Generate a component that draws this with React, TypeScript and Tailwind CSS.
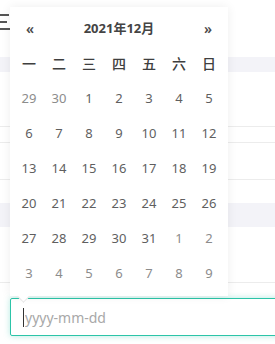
import React from "react";

const weekdays = ["一", "二", "三", "四", "五", "六", "日"];

const days: { n: number; cur: boolean }[] = [
  { n: 29, cur: false },
  { n: 30, cur: false },
  ...Array.from({ length: 31 }, (_, i) => ({ n: i + 1, cur: true })),
  ...Array.from({ length: 9 }, (_, i) => ({ n: i + 1, cur: false })),
];

const DatePopover = () => {
  return (
    <div className="absolute left-[10px] top-[7px] w-[218px] h-[289px] bg-white p-[4px] shadow-[0_0_10px_rgba(0,0,0,0.07)]">
      {/* header */}
      <div className="flex h-[35px] items-center justify-between px-[12px] text-[#4a4a4a]">
        <span className="text-[14px] font-semibold leading-none">«</span>
        <span className="text-[13px] font-bold text-[#444]">2021年12月</span>
        <span className="text-[14px] font-semibold leading-none">»</span>
      </div>
      {/* weekdays */}
      <div className="grid grid-cols-7">
        {weekdays.map((w) => (
          <div key={w} className="flex h-[35px] items-center justify-center text-[14px] font-medium text-[#3f3f3f]">
            {w}
          </div>
        ))}
      </div>
      {/* dates */}
      <div className="grid grid-cols-7">
        {days.map((d, i) => (
          <div
            key={i}
            className={
              d.cur
                ? "flex h-[35px] items-center justify-center text-[13px] text-[#5f5f5f]"
                : "flex h-[35px] items-center justify-center text-[13px] text-[#8c8c8c]"
            }
          >
            {d.n}
          </div>
        ))}
      </div>
      {/* arrow */}
      <div className="absolute left-[9px] bottom-[-5px] h-[9px] w-[9px] rotate-45 border-b border-r border-[#e6e6e6] bg-white" />
    </div>
  );
};

const App = () => {
  return (
    <div
      className="relative h-[344px] w-[275px] overflow-hidden bg-white"
      style={{ fontFamily: '"Noto Sans", "Noto Sans CJK SC", sans-serif' }}
    >
      {/* page behind the picker */}
      <div className="flex flex-col">
        <div className="h-[57px] pt-[14px]">
          <svg width="10" height="17" viewBox="0 0 10 17">
            <rect x="0" y="0" width="9" height="2" fill="#555" />
            <rect x="0" y="7" width="7" height="2" fill="#555" />
            <rect x="0" y="14" width="10" height="2" fill="#555" />
          </svg>
        </div>
        <div className="h-[15px] bg-[#f3f3f8]" />
        <div className="h-[55px] border-b border-[#ececec]" />
        <div className="h-[16px] border-b border-[#ececec]" />
        <div className="h-[37px] border-b border-[#ececec]" />
        <div className="h-[23px]" />
        <div className="h-[24px] bg-[#f3f3f8]" />
        <div className="h-[56px] border-b border-[#ececec]" />
        <div className="h-[15px]" />
        <div className="relative ml-[10px] w-[275px]">
          <input
            readOnly
            placeholder="yyyy-mm-dd"
            className="block h-[38px] w-full rounded-[2px] border border-[#2cc4a8] pl-[14px] text-[14px] text-[#333] placeholder:text-[#a8a8a8] outline-none shadow-[0_0_6px_rgba(44,196,168,0.35)]"
            style={{ fontFamily: '"Noto Sans", sans-serif' }}
          />
          {/* caret */}
          <div className="absolute left-[13px] top-[10px] h-[19px] w-px bg-[#333]" />
        </div>
      </div>
      <DatePopover />
    </div>
  );
};

export default App;
